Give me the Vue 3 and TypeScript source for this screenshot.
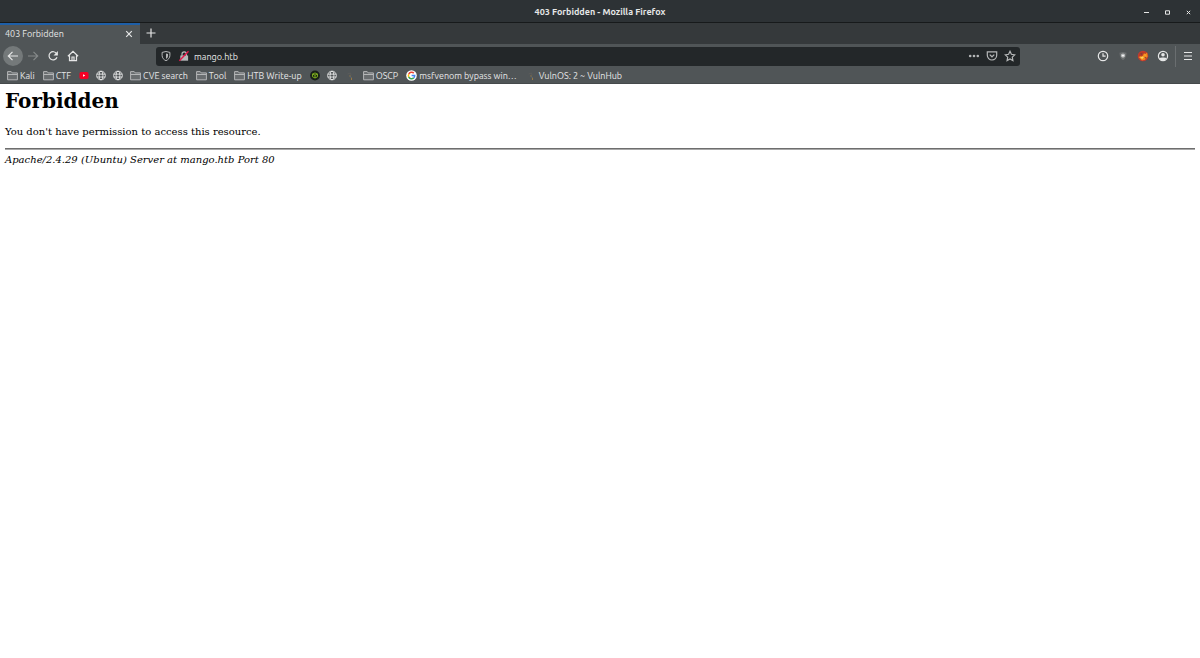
<script setup lang="ts">
import { ref } from 'vue'

type IconName = 'folder' | 'youtube' | 'globe' | 'cube' | 'spark' | 'google'
interface Bookmark {
  icon: IconName
  label?: string
  title: string
}

const address = ref('mango.htb')
const bookmarks: Bookmark[] = [
  { icon: 'folder', label: 'Kali', title: 'Kali' },
  { icon: 'folder', label: 'CTF', title: 'CTF' },
  { icon: 'youtube', title: 'YouTube' },
  { icon: 'globe', title: 'Website' },
  { icon: 'globe', title: 'Website' },
  { icon: 'folder', label: 'CVE search', title: 'CVE search' },
  { icon: 'folder', label: 'Tool', title: 'Tool' },
  { icon: 'folder', label: 'HTB Write-up', title: 'HTB Write-up' },
  { icon: 'cube', title: 'Hack The Box' },
  { icon: 'globe', title: 'Website' },
  { icon: 'spark', title: 'VulnHub' },
  { icon: 'folder', label: 'OSCP', title: 'OSCP' },
  { icon: 'google', label: 'msfvenom bypass win…', title: 'msfvenom bypass windows' },
  { icon: 'spark', label: 'VulnOS: 2 ~ VulnHub', title: 'VulnOS: 2 ~ VulnHub' },
]
</script>

<template>
  <div class="browser">
    <header class="titlebar">
      <span class="window-title">403 Forbidden - Mozilla Firefox</span>
      <div class="window-buttons">
        <button type="button" aria-label="Minimize">
          <svg viewBox="0 0 9 9"><path d="M2 4.5h5" /></svg>
        </button>
        <button type="button" aria-label="Maximize">
          <svg viewBox="0 0 9 9"><path d="M2.5 2.8h4v3.4h-4z" /></svg>
        </button>
        <button type="button" aria-label="Close window">
          <svg viewBox="0 0 9 9"><path d="M2.8 2.8l3.4 3.4M6.2 2.8L2.8 6.2" /></svg>
        </button>
      </div>
    </header>

    <div class="tabs">
      <div class="tab">
        <span class="tab-title">403 Forbidden</span>
        <button type="button" aria-label="Close tab">
          <svg viewBox="0 0 12 12"><path d="M3.2 3.2l5.6 5.6M8.8 3.2L3.2 8.8" /></svg>
        </button>
      </div>
      <button type="button" class="new-tab" aria-label="New tab">
        <svg viewBox="0 0 12 12"><path d="M6 1.5v9M1.5 6h9" /></svg>
      </button>
    </div>

    <nav class="toolbar" aria-label="Navigation">
      <div class="nav-buttons">
        <button type="button" class="back" aria-label="Back">
          <svg viewBox="0 0 12 12"><path d="M11 6H1.5M5.5 1.8L1.3 6l4.2 4.2" /></svg>
        </button>
        <button type="button" class="forward" aria-label="Forward" disabled>
          <svg viewBox="0 0 12 12"><path d="M1 6h9.5M6.5 1.8L10.7 6l-4.2 4.2" /></svg>
        </button>
        <button type="button" aria-label="Reload">
          <svg viewBox="0 0 12 12">
            <path d="M9.600 3.600A4.100 4.100 0 1 0 10 7.200" />
            <path class="solid" d="M10.900.9v4.500H6.500z" />
          </svg>
        </button>
        <button type="button" aria-label="Home">
          <svg viewBox="0 0 12 12">
            <path d="M.9 6.200L6 1.300l5.100 4.900M2.500 5.500v5.200h7V5.500M5 10.500V7h2v3.500" />
          </svg>
        </button>
      </div>

      <div class="urlbar">
        <button type="button" aria-label="Tracking protection">
          <svg class="shield" viewBox="0 0 12 12">
            <path d="M6 1.500l3.900.9v3C9.900 8 8.200 9.700 6 10.700 3.800 9.700 2.100 8 2.100 5.400v-3z" />
            <path class="solid" d="M6 3.500l2 .5v1.700C8 7.200 7.200 8.200 6 8.900z" />
          </svg>
        </button>
        <button type="button" aria-label="Connection is not secure">
          <svg viewBox="0 0 12 12">
            <path d="M4 6V4a2.200 2.200 0 0 1 4.400 0v2" />
            <path class="solid" d="M2.300 5.500h7.800v5.200H2.300z" />
            <path class="strike" d="M1.300 10.800L10.500 1.200" />
          </svg>
        </button>
        <input v-model="address" type="text" aria-label="Address" spellcheck="false" />
        <button type="button" aria-label="Page actions">
          <svg viewBox="0 0 12 12">
            <circle class="solid" cx="2.200" cy="6" r="1.300" /><circle class="solid" cx="6" cy="6" r="1.300" /><circle class="solid" cx="9.800" cy="6" r="1.300" />
          </svg>
        </button>
        <button type="button" aria-label="Save to Pocket">
          <svg viewBox="0 0 12 12">
            <path d="M1.300 1.800h9.400v3.500a4.700 4.700 0 0 1-9.400 0zM3.700 4.600L6 6.800l2.300-2.200" />
          </svg>
        </button>
        <button type="button" aria-label="Bookmark this page">
          <svg viewBox="0 0 12 12">
            <path d="M6 1.300l1.400 3 3.300.5-2.400 2.400.6 3.400L6 9l-2.900 1.600.6-3.400-2.400-2.400 3.300-.5z" />
          </svg>
        </button>
      </div>

      <div class="extensions">
        <button type="button" aria-label="History">
          <svg viewBox="0 0 12 12"><circle cx="6" cy="6" r="4.700" /><path d="M6 3.300V6.200h2.600" /></svg>
        </button>
        <button type="button" aria-label="Privacy extension">
          <svg viewBox="0 0 12 12">
            <path class="badge" d="M2.500 2.800L6 2l3.500.8C9.500 6.500 8.300 8.900 6 10.300 3.700 8.900 2.500 6.500 2.500 2.800z" />
            <circle class="glow" cx="6" cy="5.600" r="1.500" />
          </svg>
        </button>
        <button type="button" aria-label="Proxy extension">
          <svg viewBox="0 0 12 12">
            <circle class="fox-base" cx="6" cy="6" r="4.700" />
            <path class="fox" d="M1.500 7l2.300-1 1.400.7L7 3.300l1.300.8 1.800-1.500.5 4L8 9.800 5 10.500z" />
            <path class="fox-light" d="M3 7.500l3-1.200.8 1.300L5.200 9zM7.500 4.500l1.200.3-.7 1.200z" />
            <path class="fox-dark" d="M3.500 3.200l2 .2-1.400 1.500zM7.500 7.500l2-.5-1 1.800z" />
          </svg>
        </button>
        <button type="button" aria-label="Account">
          <svg viewBox="0 0 12 12">
            <circle cx="6" cy="6" r="4.600" />
            <circle class="solid" cx="6" cy="4.800" r="1.800" />
            <path class="solid" d="M2.500 8.200c1.200-.8 5.800-.8 7 0C8.700 9.800 7.500 10.500 6 10.500S3.300 9.800 2.500 8.200z" />
          </svg>
        </button>
      </div>
      <button type="button" class="menu" aria-label="Open menu">
        <svg viewBox="0 0 12 12"><path d="M2 2.500h8M2 6h8M2 9.500h8" /></svg>
      </button>
    </nav>

    <nav class="bookmarks" aria-label="Bookmarks">
      <a
        v-for="(item, i) in bookmarks"
        :key="i"
        href="#"
        :class="['icon-' + item.icon, { compact: !item.label }]"
        :title="item.title"
        :aria-label="item.title"
      >
        <svg v-if="item.icon === 'folder'" viewBox="0 0 11 11">
          <path class="folder" d="M.6 9.800V1.600h3.600l1 1.300h5.200v6.900zM.6 4.500h9.800" />
        </svg>
        <svg v-else-if="item.icon === 'youtube'" viewBox="0 0 11 11">
          <rect class="red" x="0.500" y="1.700" width="10" height="7.600" rx="1.800" />
          <path class="white" d="M4.500 4v3l2.400-1.500z" />
        </svg>
        <svg v-else-if="item.icon === 'globe'" viewBox="0 0 11 11">
          <circle cx="5.500" cy="5.500" r="4.800" />
          <ellipse cx="5.500" cy="5.500" rx="2.100" ry="4.800" />
          <path d="M1 4h9M1 7.200h9" />
        </svg>
        <svg v-else-if="item.icon === 'cube'" viewBox="0 0 11 11">
          <circle class="cube-base" cx="5.500" cy="5.500" r="5.400" />
          <path class="cube" d="M5.500 2.700l2.700 1.200v3L5.500 8.300 2.800 6.900v-3zM2.800 3.900l2.700 1.200 2.700-1.200M5.500 5.100v3.200" />
        </svg>
        <svg v-else-if="item.icon === 'google'" viewBox="0 0 11 11">
          <circle class="white" cx="5.500" cy="5.500" r="5.300" />
          <path class="g-red" d="M2.700 4.200A3.200 3.200 0 0 1 7.800 3.100" />
          <path class="g-yellow" d="M2.700 4.200a3.200 3.200 0 0 0 0 2.700" />
          <path class="g-green" d="M2.700 6.900a3.200 3.200 0 0 0 5 1" />
          <path class="g-blue" d="M5.600 5.500h3.100a3.200 3.200 0 0 1-1 2.400" />
        </svg>
        <svg v-else viewBox="0 0 11 11">
          <path class="shade" d="M3 4l3-1 .5 2" />
          <path class="spark" d="M5.500 5.300v1.300M7 7.700v2.300" />
          <path class="spark-blue" d="M5.900 6.700l.6.800" />
        </svg>
        <span v-if="item.label">{{ item.label }}</span>
      </a>
    </nav>

    <main class="page">
      <h1>Forbidden</h1>
      <p>You don't have permission to access this resource.</p>
      <hr />
      <address>Apache/2.4.29 (Ubuntu) Server at mango.htb Port 80</address>
    </main>
  </div>
</template>

<style>
body {
  margin: 0;
  background: #fff;
}
</style>

<style scoped>
.browser {
  color: #e6e7e7;
  font-family: Ubuntu, "Noto Sans", sans-serif;
  font-size: 9px;
  line-height: 12px;
}
button {
  display: flex;
  flex: none;
  align-items: center;
  justify-content: center;
  padding: 0;
  border: 0;
  color: inherit;
  background: none;
}
svg {
  display: block;
  flex: none;
  width: 12px;
  height: 12px;
  fill: none;
  stroke: currentColor;
  stroke-width: 1.2;
}
.solid {
  fill: currentColor;
  stroke: none;
}
.titlebar {
  display: grid;
  grid-template-columns: 1fr auto 1fr;
  align-items: center;
  box-sizing: border-box;
  height: 23px;
  padding-top: 2px;
  border-bottom: 1px solid #171a1b;
  background: #2d3235;
}
.window-title {
  grid-column: 2;
  font-weight: 700;
}
.window-buttons {
  display: flex;
  justify-content: flex-end;
  gap: 12px;
  padding-right: 7px;
}
.window-buttons svg {
  width: 9px;
  height: 9px;
  stroke-width: 1;
}
.tabs {
  display: flex;
  height: 21px;
  background: #35393b;
}
.tab {
  display: flex;
  box-sizing: border-box;
  align-items: center;
  justify-content: space-between;
  width: 140px;
  padding: 0 5px 2px;
  border-top: 2px solid #1e5fa8;
  background: #505557;
}
.new-tab {
  width: 22px;
  padding-bottom: 2px;
}
.toolbar {
  display: flex;
  align-items: center;
  height: 24px;
  padding-right: 6px;
  background: #505557;
}
.nav-buttons {
  display: flex;
  align-items: center;
  gap: 8px;
  width: 153px;
  padding-left: 3px;
}
.back {
  width: 20px;
  height: 20px;
  border-radius: 50%;
  background: #74797a;
}
.nav-buttons .back {
  margin-right: -4px;
}
.forward {
  color: #85898a;
}
.urlbar {
  display: flex;
  flex: 1;
  align-items: center;
  gap: 6px;
  height: 19px;
  padding: 0 4px;
  border-radius: 3px;
  color: #b5b7b8;
  background: #232729;
}
.urlbar input {
  flex: 1;
  min-width: 0;
  margin-left: -2px;
  padding: 1px 0 0;
  border: 0;
  outline: 0;
  color: #e6e7e7;
  background: none;
  font: inherit;
}
.shield {
  stroke-width: 1;
}
.strike {
  stroke: #e5174b;
  stroke-width: 1.4;
}
.extensions {
  display: flex;
  gap: 8px;
  padding: 0 6px 0 77px;
}
.badge {
  fill: #6b6f70;
  stroke: none;
}
.glow {
  fill: #fff;
  stroke: #b9bbbc;
}
.fox-base {
  fill: #b83b26;
  stroke: #c03a30;
}
.fox {
  fill: #f28a1c;
  stroke: none;
}
.fox-light {
  fill: #ffd15a;
  stroke: none;
}
.fox-dark {
  fill: #6b3a42;
  stroke: none;
}
.menu {
  width: 19px;
  height: 21px;
  padding-left: 6px;
  border-left: 1px solid #6a6e70;
}
.bookmarks {
  display: flex;
  align-items: center;
  gap: 7px;
  height: 15px;
  padding: 0 7px;
  border-bottom: 1px solid #45494b;
  background: #505557;
}
.bookmarks a {
  display: flex;
  align-items: center;
  gap: 2px;
  color: inherit;
  text-decoration: none;
  white-space: nowrap;
}
.bookmarks svg {
  width: 11px;
  height: 11px;
  stroke-width: 1;
}
.bookmarks span {
  padding-right: 1px;
}
.bookmarks .compact svg {
  width: 10px;
}
.bookmarks .icon-spark svg {
  width: 12px;
}
.folder {
  fill: #696d6f;
  stroke: #b4b6b7;
}
.red {
  fill: #f40024;
  stroke: none;
}
.white {
  fill: #fff;
  stroke: none;
}
.cube-base {
  fill: #182018;
  stroke: none;
}
.cube {
  stroke: #83b81c;
}
.g-red,
.g-yellow,
.g-green,
.g-blue {
  stroke-width: 1.5;
}
.g-red {
  stroke: #ea4335;
}
.g-yellow {
  stroke: #fbbc05;
}
.g-green {
  stroke: #34a853;
}
.g-blue {
  stroke: #4285f4;
}
.shade {
  stroke: #5b5c5b;
}
.spark {
  stroke: #9a7842;
}
.spark-blue {
  stroke: #627d8c;
}
.page {
  padding: 5px;
  color: #000;
  font-family: "DejaVu Serif", serif;
  font-size: 10px;
}
h1 {
  margin: 0 0 13px;
  font-size: 20px;
  line-height: 24px;
}
p {
  margin: 0 0 10px;
}
hr {
  margin: 0 0 4px;
  border: 0;
  border-top: 1px solid #6e6e6e;
  border-bottom: 1px solid #a8a8a8;
}
</style>
